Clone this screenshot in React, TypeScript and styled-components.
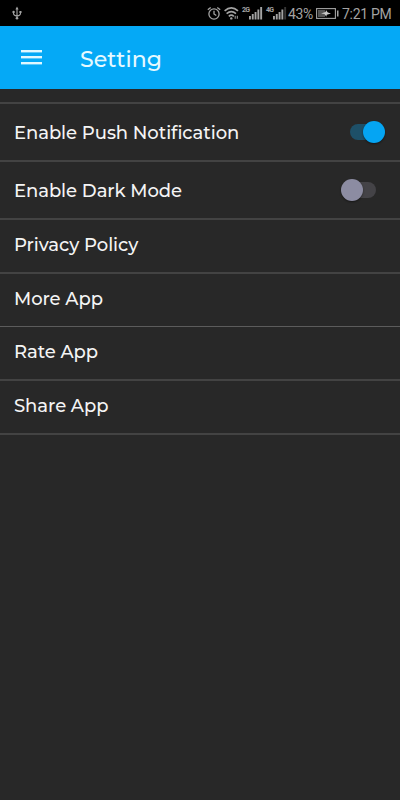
import React from 'react';
import styled, { createGlobalStyle } from 'styled-components';

const GlobalStyle = createGlobalStyle`
  body {
    margin: 0;
    background: #282828;
    font-family: Montserrat, Inter, sans-serif;
  }
`;

const Screen = styled.div`
  width: 100%;
  height: 800px;
  overflow: hidden;
  background: #282828;
  display: flex;
  flex-direction: column;
`;

const StatusBar = styled.header`
  height: 26px;
  flex: none;
  background: #000;
  color: #a3a3a3;
  display: flex;
  justify-content: space-between;
  padding: 0 9px 0 12px;
  font-family: Roboto, sans-serif;
  font-size: 14px;
  line-height: 28px;
`;

const StatusGroup = styled.div`
  display: flex;
  align-items: flex-start;
  white-space: nowrap;
`;

const Glyph = styled.svg<{ $gap?: number }>`
  display: block;
  flex: none;
  margin-right: ${(p) => p.$gap ?? 0}px;
`;

const StatusText = styled.span<{ $width: number; $gap?: number; $spacing?: number }>`
  width: ${(p) => p.$width}px;
  margin-right: ${(p) => p.$gap ?? 0}px;
  letter-spacing: ${(p) => p.$spacing ?? 0}px;
`;

const NetworkTag = styled.span`
  width: 7px;
  padding-top: 6px;
  font-size: 7px;
  font-weight: 700;
  line-height: 8px;
  letter-spacing: -0.8px;
`;

const AppBar = styled.div`
  height: 63px;
  flex: none;
  box-sizing: border-box;
  padding: 2px 20px 0;
  background: #05a9f6;
  display: flex;
  align-items: center;
`;

const MenuButton = styled.button`
  width: 22px;
  height: 16px;
  margin: 0 38px 3px 0;
  padding: 0;
  border: 0;
  background: none;
`;

const Title = styled.h1`
  margin: 0;
  padding-top: 2px;
  color: #e6f9ff;
  font-size: 22px;
  font-weight: 500;
  line-height: 30px;
  letter-spacing: 0.1px;
`;

const List = styled.main`
  margin-top: 13px;
  border-top: 2px solid #434343;
`;

const Row = styled.div<{ $height: number; $line?: number }>`
  box-sizing: border-box;
  height: ${(p) => p.$height}px;
  border-bottom: ${(p) => p.$line ?? 2}px solid ${(p) => (p.$line === 1 ? '#5c5c5c' : '#434343')};
  padding: 0 15px 0 14px;
  display: flex;
  align-items: center;
  justify-content: space-between;
`;

const Label = styled.span<{ $drop: number; $lift: number }>`
  color: #f4f4f4;
  font-size: 18px;
  font-weight: 500;
  line-height: 24px;
  letter-spacing: -0.06px;
  padding-top: ${(p) => p.$drop}px;
  padding-bottom: ${(p) => p.$lift}px;
`;

const Toggle = styled.button<{ $on: boolean }>`
  width: 35px;
  height: 22px;
  margin: 0 ${(p) => (p.$on ? 0 : 9)}px 1px 0;
  padding: 0;
  border: 0;
  background: none;
  display: flex;
  align-items: center;
  flex-direction: ${(p) => (p.$on ? 'row' : 'row-reverse')};
`;

const Track = styled.span<{ $on: boolean }>`
  width: 24px;
  height: 16px;
  flex: none;
  background: ${(p) => (p.$on ? '#1e5068' : '#444347')};
  border-radius: ${(p) => (p.$on ? '8px 0 0 8px' : '0 8px 8px 0')};
`;

const Thumb = styled.span<{ $on: boolean }>`
  width: 22px;
  height: 22px;
  flex: none;
  z-index: 1;
  margin: ${(p) => (p.$on ? '0 0 0 -11px' : '0 -11px 0 0')};
  border-radius: 50%;
  background: ${(p) => (p.$on ? '#05a5f3' : '#8c8ca2')};
  box-shadow: 0 1px 2px rgba(0, 0, 0, 0.45);
`;

type Item = {
  label: string;
  height: number;
  drop: number;
  lift: number;
  line?: number;
  on?: boolean;
};

const items: Item[] = [
  { label: 'Enable Push Notification', height: 58, drop: 1, lift: 0, on: true },
  { label: 'Enable Dark Mode', height: 58, drop: 1, lift: 0, on: false },
  { label: 'Privacy Policy', height: 54, drop: 0, lift: 3 },
  { label: 'More App', height: 53, drop: 0, lift: 3, line: 1 },
  { label: 'Rate App', height: 54, drop: 0, lift: 3 },
  { label: 'Share App', height: 54, drop: 0, lift: 3 },
];

const Signal = ({ gap, last }: { gap: number; last: string }) => (
  <Glyph width="14" height="26" viewBox="0 0 14 26" $gap={gap}>
    <g fill="#a3a3a3">
      <rect x="0" y="16" width="1.9" height="3.5" />
      <rect x="2.8" y="14" width="1.9" height="5.5" />
      <rect x="5.6" y="12" width="1.9" height="7.5" />
      <rect x="8.4" y="9.5" width="1.9" height="10" />
      <rect x="11.2" y="7" width="1.9" height="12.5" fill={last} />
    </g>
  </Glyph>
);

export default function App() {
  return (
    <Screen>
      <GlobalStyle />
      <StatusBar>
        <Glyph width="10" height="26" viewBox="0 0 10 26" fill="none" stroke="#a3a3a3" strokeWidth="1.1">
          <path d="M5 8v11M1.5 11.5v2q0 2 3.5 2.5M8.5 11.5v2q0 2-3.5 2.5" />
          <path d="M5 6.6 3.4 9.5h3.2z" fill="#a3a3a3" stroke="none" />
          <circle cx="5" cy="18.3" r="1.3" fill="#a3a3a3" stroke="none" />
          <circle cx="1.6" cy="12" r="1.2" fill="#a3a3a3" stroke="none" />
          <rect x="7.4" y="11" width="2.1" height="2" fill="#a3a3a3" stroke="none" />
        </Glyph>
        <StatusGroup>
          <Glyph width="14" height="26" viewBox="0 0 14 26" fill="none" stroke="#a3a3a3" strokeWidth="1.3" $gap={3}>
            <circle cx="7" cy="14" r="5.1" />
            <path d="M7 10.8V14l2.3 1.5M.8 9.8 3.7 7.4M13.2 9.8l-2.9-2.4" />
          </Glyph>
          <Glyph width="15" height="26" viewBox="0 0 15 26" fill="none" stroke="#a3a3a3" strokeWidth="1.6" $gap={3}>
            <path d="M.6 10.8q6.7-6 13.4 0M2.6 13.6q4.7-4 9.4 0M4.8 16.3q2.5-2.2 5 0" />
            <circle cx="7.3" cy="18.4" r="1.2" fill="#a3a3a3" stroke="none" />
            <path d="M11.2 15.8v3M13.3 15.8v3" strokeWidth="1" />
          </Glyph>
          <NetworkTag>2G</NetworkTag>
          <Signal gap={3} last="#a3a3a3" />
          <NetworkTag>4G</NetworkTag>
          <Signal gap={1} last="#353535" />
          <StatusText $width={25} $gap={3} $spacing={-0.4}>43%</StatusText>
          <Glyph width="23" height="26" viewBox="0 0 23 26" $gap={3}>
            <rect x=".6" y="8.6" width="18.8" height="9.8" fill="none" stroke="#a3a3a3" strokeWidth="1.1" />
            <rect x="2" y="10" width="7" height="7" fill="#555" />
            <path d="M5 13.5 9.5 12l.5-2 1.8 2.5 3.2 1-4.2 1.2-.5 2-1.8-2.6z" fill="#c9c9c9" />
            <rect x="21" y="10.5" width="1.5" height="6" fill="#a3a3a3" />
          </Glyph>
          <StatusText $width={49} $spacing={-0.3}>7:21 PM</StatusText>
        </StatusGroup>
      </StatusBar>
      <AppBar>
        <MenuButton aria-label="Menu">
          <Glyph width="22" height="16" viewBox="0 0 22 16" fill="#e0f8ff">
            <rect x="1" y="1" width="21" height="2.4" />
            <rect x="1" y="7" width="21" height="2.4" />
            <rect x="1" y="13" width="21" height="2.4" />
          </Glyph>
        </MenuButton>
        <Title>Setting</Title>
      </AppBar>
      <List>
        {items.map((item) => (
          <Row key={item.label} $height={item.height} $line={item.line}>
            <Label $drop={item.drop} $lift={item.lift}>{item.label}</Label>
            {item.on !== undefined && (
              <Toggle $on={item.on} role="switch" aria-checked={item.on} aria-label={item.label}>
                <Track $on={item.on} />
                <Thumb $on={item.on} />
              </Toggle>
            )}
          </Row>
        ))}
      </List>
    </Screen>
  );
}
